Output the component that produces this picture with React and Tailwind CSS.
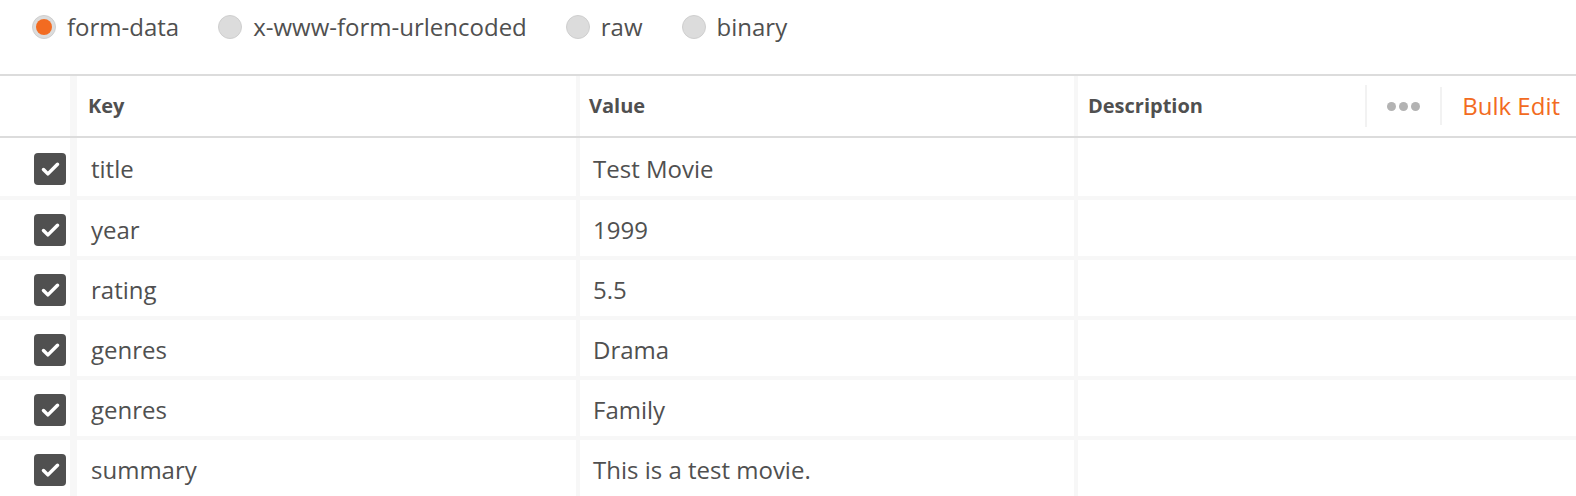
import { Check } from "lucide-react";

const rows = [
  { key: "title", value: "Test Movie" },
  { key: "year", value: "1999" },
  { key: "rating", value: "5.5" },
  { key: "genres", value: "Drama" },
  { key: "genres", value: "Family" },
  { key: "summary", value: "This is a test movie." },
];

const modes = ["form-data", "x-www-form-urlencoded", "raw", "binary"];

export default function App() {
  return (
    <div className="w-[1576px] h-[496px] overflow-hidden bg-white text-[#505050] font-['Open_Sans',sans-serif]">
      {/* BODY TYPE */}
      <div className="h-[74px] flex items-start pt-[15px] pl-[32px] gap-[39px]">
        {modes.map((m, i) => (
          <label key={m} className="flex items-center gap-[11px] h-[24px]">
            <Radio checked={i === 0} />
            <span className="text-[24px] leading-none">{m}</span>
          </label>
        ))}
      </div>

      {/* TABLE HEADER */}
      <div className="flex h-[64px] border-t-2 border-b-2 border-[#dcdcdc]">
        <div className="w-[70px]" />
        <div className="w-[506px] border-l-[7px] border-[#f7f7f7] flex items-center pl-[11px] text-[20px] font-bold">
          Key
        </div>
        <div className="w-[498px] border-l-4 border-[#f7f7f7] flex items-center pl-[9px] text-[20px] font-bold">
          Value
        </div>
        <div className="flex-1 border-l-4 border-[#f7f7f7] flex items-center pl-[10px] text-[20px] font-bold">
          <span className="flex-1">Description</span>
          <div className="h-[42px] border-l-2 border-[#f2f2f2] flex items-center gap-[3px] px-[20px]">
            <span className="w-[9px] h-[9px] rounded-full bg-[#b3b3b3]" />
            <span className="w-[9px] h-[9px] rounded-full bg-[#b3b3b3]" />
            <span className="w-[9px] h-[9px] rounded-full bg-[#b3b3b3]" />
          </div>
          <div className="h-[38px] border-l-2 border-[#f2f2f2] flex items-center pl-[20px] pr-[16px] font-normal text-[24px] text-[#f26b21]">
            Bulk Edit
          </div>
        </div>
      </div>

      {/* ROWS */}
      {rows.map((r, i) => (
        <div
          key={i}
          className={`flex ${i === 0 ? "h-[58px]" : "h-[60px] border-t-4 border-[#f7f7f7]"}`}
        >
          <div className="w-[70px] flex items-center justify-end pr-[4px] pt-[4px]">
            <div className="w-[32px] h-[32px] rounded-[4px] bg-[#505050] flex items-center justify-center">
              <Check size={21} strokeWidth={4} className="text-white" />
            </div>
          </div>
          <div className="w-[506px] border-l-[7px] border-[#f7f7f7] flex items-center pl-[14px] pt-[4px] text-[24px]">
            {r.key}
          </div>
          <div className="w-[498px] border-l-4 border-[#f7f7f7] flex items-center pl-[13px] pt-[4px] text-[24px]">
            {r.value}
          </div>
          <div className="flex-1 border-l-4 border-[#f7f7f7]" />
        </div>
      ))}
    </div>
  );
}

function Radio({ checked }) {
  return (
    <span className="w-[24px] h-[24px] rounded-full bg-[#dcdcdc] border border-[#cfcfcf] flex items-center justify-center">
      {checked && <span className="w-[16px] h-[16px] rounded-full bg-[#f26b21]" />}
    </span>
  );
}
